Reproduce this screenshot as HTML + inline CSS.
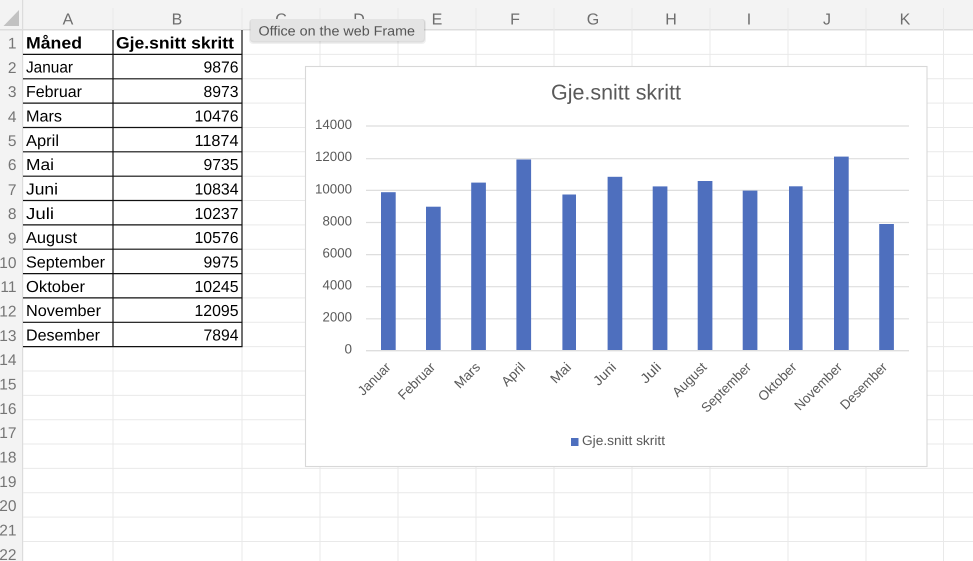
<!DOCTYPE html>
<html><head><meta charset="utf-8"><title>Gje.snitt skritt</title>
<style>
html,body{margin:0;padding:0;background:#fff;width:973px;height:561px;overflow:hidden}
svg{display:block;filter:blur(.35px)}
text{font-family:"Liberation Sans",sans-serif}
.c{font-size:16px;fill:#000}
.b{font-size:16.5px;fill:#000;font-weight:bold}
.r{font-size:15.5px;fill:#757575}
.h{font-size:16px;fill:#6e6e6e}
.a{font-size:13.5px;fill:#595959}
</style></head><body>
<svg width="973" height="561" viewBox="0 0 973 561" xmlns="http://www.w3.org/2000/svg" text-rendering="geometricPrecision">
<rect width="973" height="561" fill="#fff"/>
<rect width="973" height="29.5" fill="#f3f3f3"/>
<rect width="22.5" height="561" fill="#f3f3f3"/>
<rect x="0" y="29" width="973" height="1.5" fill="#dcdcdc"/>
<rect x="22" y="0" width="1.2" height="561" fill="#dcdcdc"/>
<polygon points="3.5,26 19,10 19,26" fill="#c2c2c2"/>
<!-- grid -->
<g stroke="#e9e9e9" stroke-width="1">
<path d="M113 8V561M242 8V561M320 8V561M398 8V561M476 8V561M554 8V561M632 8V561M710 8V561M788 8V561M866 8V561M943.5 8V561"/>
<path d="M23 54.4H973M23 78.8H973M23 103.1H973M23 127.5H973M23 151.8H973M23 176.2H973M23 200.5H973M23 224.9H973M23 249.2H973M23 273.6H973M23 297.9H973M23 322.3H973M23 346.6H973M23 371H973M23 395.4H973M23 419.7H973M23 444H973M23 468.4H973M23 492.7H973M23 517.1H973M23 541.5H973"/>
</g>
<!-- column headers -->
<g text-anchor="middle">
<text class="h" x="68" y="24.5">A</text><text class="h" x="177" y="24.5">B</text><text class="h" x="281" y="24.5">C</text><text class="h" x="359" y="24.5">D</text><text class="h" x="437" y="24.5">E</text><text class="h" x="515" y="24.5">F</text><text class="h" x="593" y="24.5">G</text><text class="h" x="671" y="24.5">H</text><text class="h" x="749" y="24.5">I</text><text class="h" x="827" y="24.5">J</text><text class="h" x="905" y="24.5">K</text>
</g>
<!-- row headers -->
<g text-anchor="end">
<text class="r" x="16.5" y="48.5">1</text><text class="r" x="16.5" y="73">2</text><text class="r" x="16.5" y="97">3</text><text class="r" x="16.5" y="122">4</text><text class="r" x="16.5" y="146">5</text><text class="r" x="16.5" y="170">6</text><text class="r" x="16.5" y="195">7</text><text class="r" x="16.5" y="219">8</text><text class="r" x="16.5" y="243.5">9</text><text class="r" x="16.5" y="268">10</text><text class="r" x="16.5" y="292">11</text><text class="r" x="16.5" y="316.5">12</text><text class="r" x="16.5" y="341">13</text><text class="r" x="16.5" y="365">14</text><text class="r" x="16.5" y="389.5">15</text><text class="r" x="16.5" y="414">16</text><text class="r" x="16.5" y="438">17</text><text class="r" x="16.5" y="462.5">18</text><text class="r" x="16.5" y="487">19</text><text class="r" x="16.5" y="511">20</text><text class="r" x="16.5" y="535.5">21</text><text class="r" x="16.5" y="560">22</text>
</g>
<!-- table borders -->
<path d="M113 30V346.6M242 30V346.6M23 54.4H242.6M23 78.8H242.6M23 103.1H242.6M23 127.5H242.6M23 151.8H242.6M23 176.2H242.6M23 200.5H242.6M23 224.9H242.6M23 249.2H242.6M23 273.6H242.6M23 297.9H242.6M23 322.3H242.6M23 346.6H242.6" stroke="#111" stroke-width="1.2" fill="none"/>
<!-- cells -->
<text class="b" x="26" y="48.7" textLength="56" lengthAdjust="spacingAndGlyphs">Måned</text>
<text class="b" x="116" y="48.7" textLength="118" lengthAdjust="spacingAndGlyphs">Gje.snitt skritt</text>
<text class="c" x="26" y="72.7" textLength="47" lengthAdjust="spacingAndGlyphs">Januar</text>
<text class="c" x="26" y="97" textLength="56" lengthAdjust="spacingAndGlyphs">Februar</text>
<text class="c" x="26" y="121.4" textLength="36" lengthAdjust="spacingAndGlyphs">Mars</text>
<text class="c" x="26" y="145.8" textLength="33" lengthAdjust="spacingAndGlyphs">April</text>
<text class="c" x="26" y="170.1" textLength="28" lengthAdjust="spacingAndGlyphs">Mai</text>
<text class="c" x="26" y="194.5" textLength="32" lengthAdjust="spacingAndGlyphs">Juni</text>
<text class="c" x="26" y="218.8" textLength="28" lengthAdjust="spacingAndGlyphs">Juli</text>
<text class="c" x="26" y="243.2" textLength="51" lengthAdjust="spacingAndGlyphs">August</text>
<text class="c" x="26" y="267.5" textLength="79" lengthAdjust="spacingAndGlyphs">September</text>
<text class="c" x="26" y="291.9" textLength="59" lengthAdjust="spacingAndGlyphs">Oktober</text>
<text class="c" x="26" y="316.2" textLength="75" lengthAdjust="spacingAndGlyphs">November</text>
<text class="c" x="26" y="340.6" textLength="74" lengthAdjust="spacingAndGlyphs">Desember</text>
<g text-anchor="end">
<text class="c" x="238.5" y="72.7" textLength="35" lengthAdjust="spacingAndGlyphs">9876</text>
<text class="c" x="238.5" y="97" textLength="35" lengthAdjust="spacingAndGlyphs">8973</text>
<text class="c" x="238.5" y="121.4" textLength="44" lengthAdjust="spacingAndGlyphs">10476</text>
<text class="c" x="238.5" y="145.8" textLength="44" lengthAdjust="spacingAndGlyphs">11874</text>
<text class="c" x="238.5" y="170.1" textLength="35" lengthAdjust="spacingAndGlyphs">9735</text>
<text class="c" x="238.5" y="194.5" textLength="44" lengthAdjust="spacingAndGlyphs">10834</text>
<text class="c" x="238.5" y="218.8" textLength="44" lengthAdjust="spacingAndGlyphs">10237</text>
<text class="c" x="238.5" y="243.2" textLength="44" lengthAdjust="spacingAndGlyphs">10576</text>
<text class="c" x="238.5" y="267.5" textLength="35" lengthAdjust="spacingAndGlyphs">9975</text>
<text class="c" x="238.5" y="291.9" textLength="44" lengthAdjust="spacingAndGlyphs">10245</text>
<text class="c" x="238.5" y="316.2" textLength="44" lengthAdjust="spacingAndGlyphs">12095</text>
<text class="c" x="238.5" y="340.6" textLength="35" lengthAdjust="spacingAndGlyphs">7894</text>
</g>
<!-- tooltip -->
<rect x="249" y="19" width="177" height="25" rx="4" fill="#000" opacity=".06"/>
<rect x="250" y="19" width="175" height="23.5" rx="3.5" fill="#000" opacity=".08"/>
<rect x="250.5" y="19" width="173.5" height="22" rx="3" fill="#e4e4e4"/>
<text x="258.5" y="35.5" font-size="13.5" fill="#555" textLength="156.5" lengthAdjust="spacingAndGlyphs">Office on the web Frame</text>
<!-- chart -->
<rect x="305.5" y="66.5" width="621.5" height="400" fill="#fff" stroke="#d8d8d8" stroke-width="1.1"/>
<text x="616" y="99.5" font-size="21.5" fill="#595959" text-anchor="middle" textLength="130" lengthAdjust="spacingAndGlyphs">Gje.snitt skritt</text>
<path d="M366 126H909M366 158.7H909M366 190.4H909M366 222.5H909M366 254.6H909M366 286.7H909M366 318.8H909" stroke="#dedede" stroke-width="1.2"/>
<g text-anchor="end">
<text class="a" x="352" y="129" textLength="37" lengthAdjust="spacingAndGlyphs">14000</text>
<text class="a" x="352" y="161" textLength="37" lengthAdjust="spacingAndGlyphs">12000</text>
<text class="a" x="352" y="193.5" textLength="37" lengthAdjust="spacingAndGlyphs">10000</text>
<text class="a" x="352" y="225.5" textLength="29.5" lengthAdjust="spacingAndGlyphs">8000</text>
<text class="a" x="352" y="257.5" textLength="29.5" lengthAdjust="spacingAndGlyphs">6000</text>
<text class="a" x="352" y="289.5" textLength="29.5" lengthAdjust="spacingAndGlyphs">4000</text>
<text class="a" x="352" y="321.5" textLength="29.5" lengthAdjust="spacingAndGlyphs">2000</text>
<text class="a" x="352" y="353.5">0</text>
</g>
<g fill="#4e6fbe">
<rect x="381" y="192.2" width="14.7" height="158.5"/>
<rect x="426" y="206.7" width="14.7" height="144"/>
<rect x="471.2" y="182.6" width="14.7" height="168.1"/>
<rect x="516.4" y="159.5" width="14.7" height="191.2"/>
<rect x="562.4" y="194.5" width="13.6" height="156.2"/>
<rect x="607.6" y="176.8" width="14.7" height="173.9"/>
<rect x="652.7" y="186.4" width="14.7" height="164.3"/>
<rect x="697.7" y="181" width="14.7" height="169.7"/>
<rect x="742.7" y="190.6" width="14.7" height="160.1"/>
<rect x="789" y="186.3" width="13.6" height="164.4"/>
<rect x="834" y="156.6" width="14.7" height="194.1"/>
<rect x="879.2" y="224" width="14.7" height="126.7"/>
</g>
<rect x="366" y="350" width="543" height="1.4" fill="#dedede"/>
<g text-anchor="end">
<text class="a" transform="translate(391.5 368) rotate(-45)" textLength="40" lengthAdjust="spacingAndGlyphs">Januar</text>
<text class="a" transform="translate(436 368) rotate(-45)" textLength="46" lengthAdjust="spacingAndGlyphs">Februar</text>
<text class="a" transform="translate(481 368) rotate(-45)" textLength="30" lengthAdjust="spacingAndGlyphs">Mars</text>
<text class="a" transform="translate(526 368) rotate(-45)" textLength="27" lengthAdjust="spacingAndGlyphs">April</text>
<text class="a" transform="translate(572 368) rotate(-45)" textLength="23" lengthAdjust="spacingAndGlyphs">Mai</text>
<text class="a" transform="translate(617 368) rotate(-45)" textLength="26" lengthAdjust="spacingAndGlyphs">Juni</text>
<text class="a" transform="translate(662 368) rotate(-45)" textLength="23" lengthAdjust="spacingAndGlyphs">Juli</text>
<text class="a" transform="translate(707.5 368) rotate(-45)" textLength="42" lengthAdjust="spacingAndGlyphs">August</text>
<text class="a" transform="translate(752 368) rotate(-45)" textLength="64" lengthAdjust="spacingAndGlyphs">September</text>
<text class="a" transform="translate(797.5 368) rotate(-45)" textLength="48" lengthAdjust="spacingAndGlyphs">Oktober</text>
<text class="a" transform="translate(843 368) rotate(-45)" textLength="61" lengthAdjust="spacingAndGlyphs">November</text>
<text class="a" transform="translate(888 368) rotate(-45)" textLength="60" lengthAdjust="spacingAndGlyphs">Desember</text>
</g>
<rect x="571" y="438" width="7.5" height="8" fill="#4e6fbe"/>
<text class="a" x="582" y="445" textLength="83" lengthAdjust="spacingAndGlyphs">Gje.snitt skritt</text>
</svg>
</body></html>
